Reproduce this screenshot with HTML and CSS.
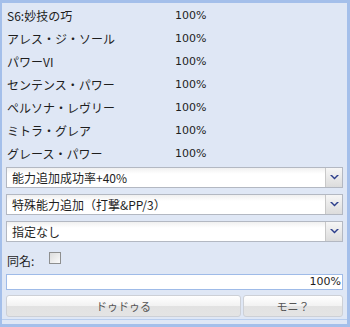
FILE: index.html
```html
<!DOCTYPE html>
<html lang="ja">
<head>
  <meta charset="UTF-8">
  <title>能力追加</title>
  <link rel="stylesheet" href="styles.css">
</head>
<body>
  <div class="panel">
    <div class="rows">
      <div class="row"><span class="name">S6:妙技の巧</span><span class="rate">100%</span></div>
      <div class="row"><span class="name">アレス・ジ・ソール</span><span class="rate">100%</span></div>
      <div class="row"><span class="name">パワーVI</span><span class="rate">100%</span></div>
      <div class="row"><span class="name">センテンス・パワー</span><span class="rate">100%</span></div>
      <div class="row"><span class="name">ペルソナ・レヴリー</span><span class="rate">100%</span></div>
      <div class="row"><span class="name">ミトラ・グレア</span><span class="rate">100%</span></div>
      <div class="row"><span class="name">グレース・パワー</span><span class="rate">100%</span></div>
    </div>

    <div class="selects">
      <div class="select">
        <span class="select-text">能力追加成功率+40%</span>
        <span class="select-arrow"><svg width="9" height="6" viewBox="0 0 9 6"><path d="M0 0h2l2.5 2.5L7 0h2L4.5 4.5z" fill="#2d3f8c"/></svg></span>
      </div>
      <div class="select">
        <span class="select-text">特殊能力追加（打撃&amp;PP/3）</span>
        <span class="select-arrow"><svg width="9" height="6" viewBox="0 0 9 6"><path d="M0 0h2l2.5 2.5L7 0h2L4.5 4.5z" fill="#2d3f8c"/></svg></span>
      </div>
      <div class="select">
        <span class="select-text">指定なし</span>
        <span class="select-arrow"><svg width="9" height="6" viewBox="0 0 9 6"><path d="M0 0h2l2.5 2.5L7 0h2L4.5 4.5z" fill="#2d3f8c"/></svg></span>
      </div>
    </div>

    <div class="same-name">
      <span>同名:</span>
      <span class="checkbox"></span>
    </div>

    <div class="total">100%</div>

    <div class="buttons">
      <div class="btn btn-main">ドゥドゥる</div>
      <div class="btn btn-sub">モニ？</div>
    </div>
  </div>
</body>
</html>
```

FILE: styles.css
```css
html, body {
  margin: 0;
  padding: 0;
}

body {
  width: 350px;
  height: 327px;
  background: #dfe7f5;
  font-family: "Noto Sans CJK JP", "DejaVu Sans", sans-serif;
  font-size: 12px;
  color: #1e1e1e;
}

.panel {
  box-sizing: border-box;
  width: 350px;
  height: 327px;
  border: solid #a4bfea;
  border-width: 3px 3px 3px 2px;
  padding: 1px 4px 0 4px;
  background: #dfe7f5;
  box-shadow: inset 0 -4px 0 #dfe7f5, inset 0 -5px 0 #b8cdee;
}

.rows {
  display: flex;
  flex-direction: column;
}

.row {
  display: flex;
  height: 23px;
  align-items: center;
  padding-left: 1px;
}

.name {
  width: 168px;
}

.rate {
  font-family: "DejaVu Sans", sans-serif;
  font-size: 11px;
}

.selects {
  display: flex;
  flex-direction: column;
  gap: 6px;
  margin-top: 2px;
}

.select {
  display: flex;
  box-sizing: border-box;
  height: 21px;
  border: 1px solid #b3b8c2;
  background: linear-gradient(#f0f0f0, #ffffff 6px);
  align-items: center;
}

.select-text {
  flex: 1;
  padding-left: 5px;
}

.select-arrow {
  display: flex;
  width: 16px;
  height: 19px;
  align-items: center;
  justify-content: center;
  border-left: 1px solid #c8c8c8;
  background: linear-gradient(#f6f6f6, #dcdcdc);
}

.same-name {
  display: flex;
  height: 22px;
  padding-top: 7px;
  padding-bottom: 1px;
  align-items: center;
  gap: 15px;
  padding-left: 1px;
}

.checkbox {
  box-sizing: border-box;
  width: 12px;
  height: 12px;
  border: 1px solid #8e8f8f;
  background: linear-gradient(135deg, #dcdcdc, #fafafa);
  margin-bottom: 5px;
}

.total {
  box-sizing: border-box;
  height: 16px;
  margin-top: 2px;
  border: 1px solid #9fbbe8;
  background: #fff;
  text-align: right;
  font-family: "DejaVu Sans", sans-serif;
  font-size: 11px;
  line-height: 14px;
  padding-right: 1px;
}

.buttons {
  display: flex;
  gap: 2px;
  margin-top: 5px;
}

.btn {
  box-sizing: border-box;
  height: 22px;
  border: 1px solid #cdd0d6;
  border-radius: 3px;
  background: linear-gradient(#ffffff, #f2f2f2 50%, #e2e2e2 50%, #e4e4e4);
  color: #555;
  text-align: center;
  line-height: 20px;
  font-size: 11px;
}

.btn-main {
  width: 235px;
}

.btn-sub {
  flex: 1;
}
```
